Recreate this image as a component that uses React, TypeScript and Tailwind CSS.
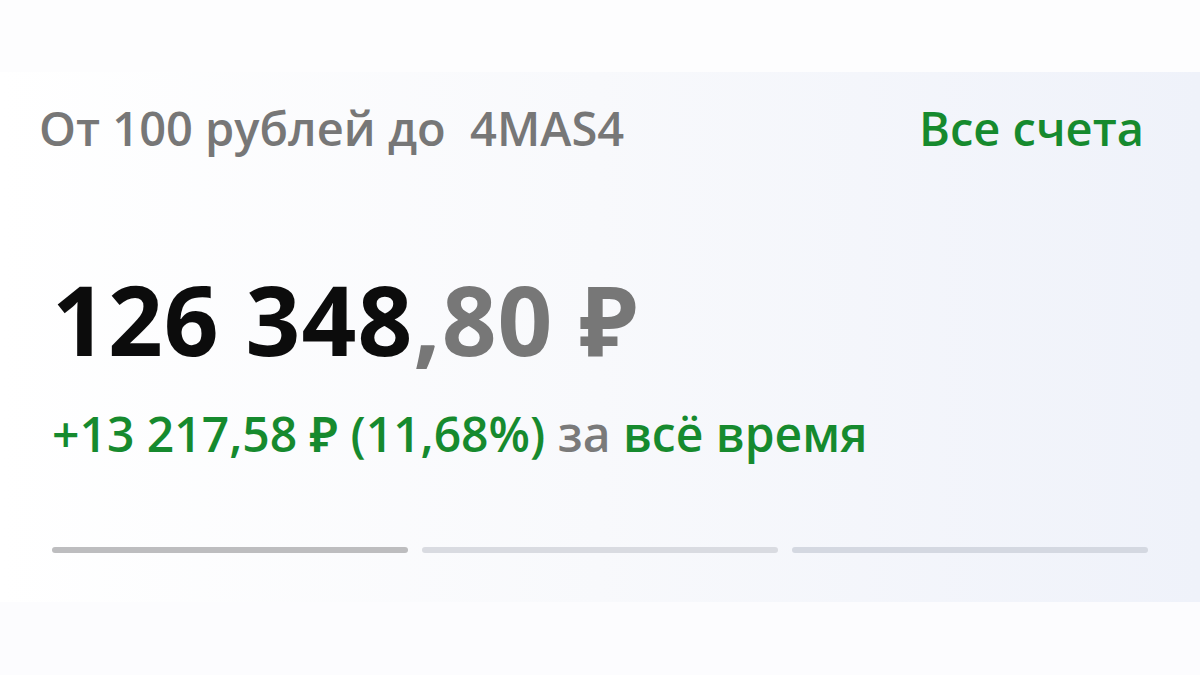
export default function App() {
  const bars = [
    { id: 1, color: 'bg-[#bdbdbf]' },
    { id: 2, color: 'bg-[#d9dbe1]' },
    { id: 3, color: 'bg-[#d4d8e1]' },
  ];

  return (
    <div className="w-[1200px] h-[675px] bg-[#fcfcfe] flex flex-col overflow-hidden" style={{ fontFamily: '"Open Sans", "Noto Sans", sans-serif' }}>
      <div className="h-[72px] bg-[#fdfdfe]" />

      <div className="h-[530px] bg-gradient-to-r from-[#ffffff] via-[#f8f9fc] to-[#eff2fa] px-[52px] pt-[24px] flex flex-col">
        <div className="flex items-center justify-between">
          <div className="text-[47px] leading-[64px] font-semibold text-[#777777] -ml-[13px] whitespace-pre">От 100 рублей до  4MAS4</div>
          <div className="text-[47px] leading-[64px] font-semibold text-[#168a2e] mr-[4px]">Все счета</div>
        </div>

        <div className="mt-[104px] text-[96px] leading-[110px] font-bold tracking-[1px]">
          <span className="text-[#0c0c0c]">126 348</span>
          <span className="text-[#777777]">,80 ₽</span>
        </div>

        <div className="mt-[30px] text-[48px] leading-[60px] font-semibold">
          <span className="text-[#168a2e]">+13 217,58 ₽ (11,68%)</span>
          <span className="text-[#7a7a7a]"> за </span>
          <span className="text-[#168a2e]">всё время</span>
        </div>

        <div className="mt-[83px] grid grid-cols-3 gap-[14px]">
          {bars.map((b) => (
            <div key={b.id} className={`h-[6px] rounded-full ${b.color}`} />
          ))}
        </div>
      </div>

      <div className="flex-1 bg-[#fcfcfe]" />
    </div>
  );
}
